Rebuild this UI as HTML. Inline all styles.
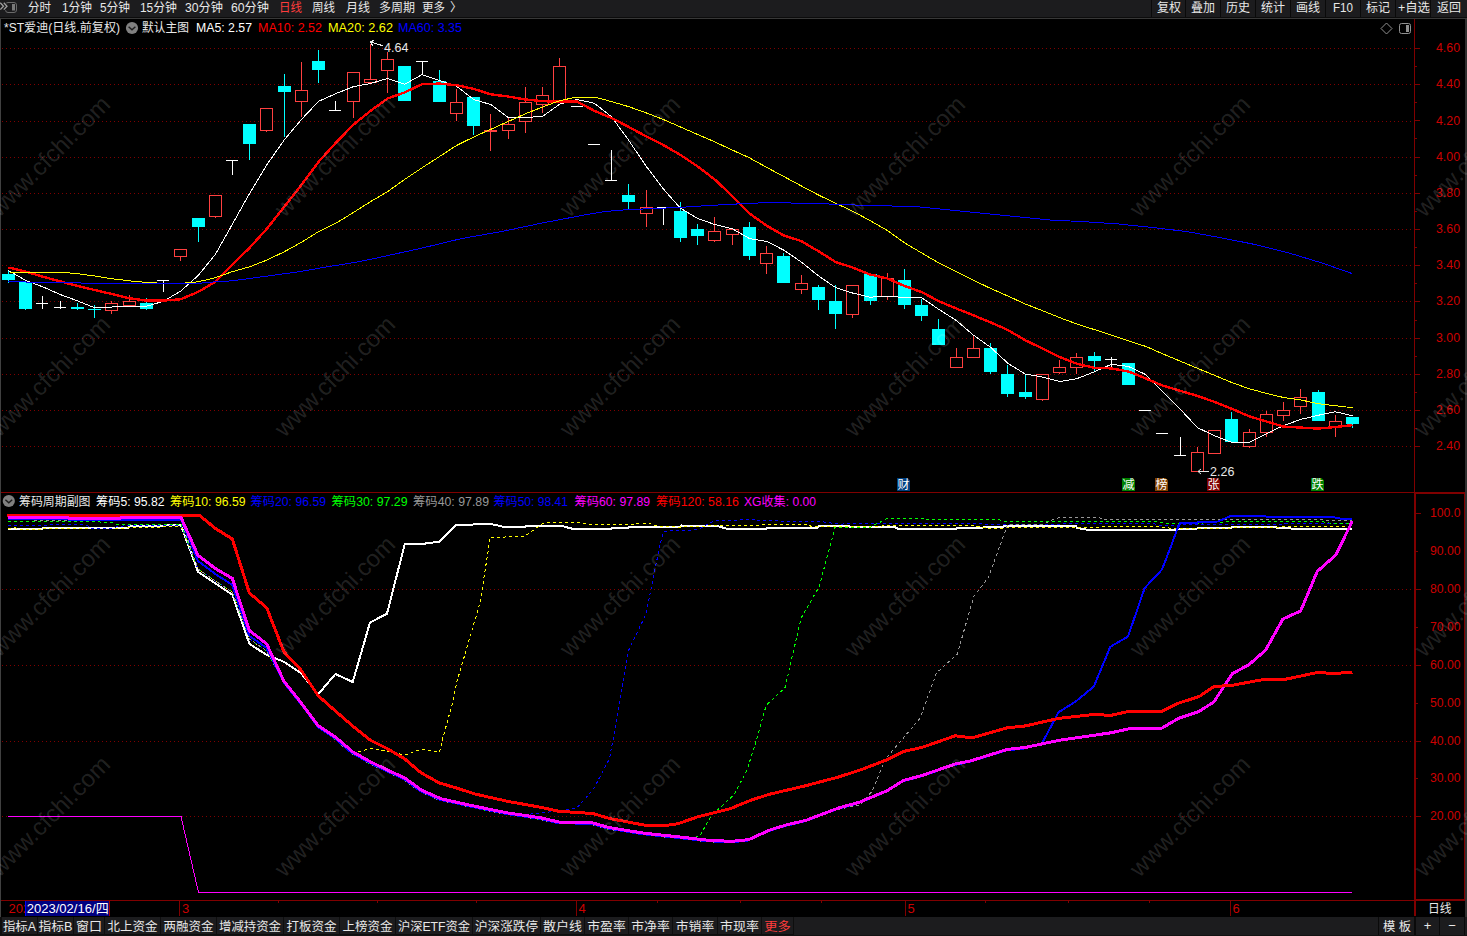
<!DOCTYPE html><html><head><meta charset="utf-8"><title>chart</title><style>
html,body{margin:0;padding:0;background:#000;}body{width:1467px;height:936px;overflow:hidden;position:relative;}
svg{position:absolute;left:0;top:0;font-family:"Liberation Sans","Noto Sans CJK SC",sans-serif;}
text{white-space:pre}
</style></head><body>
<svg width="1467" height="936" viewBox="0 0 1467 936" shape-rendering="auto">
<rect x="0" y="0" width="1467" height="936" fill="#000"/>
<line x1="2" y1="48.5" x2="1412" y2="48.5" stroke="#800000" stroke-width="1" stroke-dasharray="1 3" shape-rendering="crispEdges"/>
<line x1="2" y1="84.5" x2="1412" y2="84.5" stroke="#800000" stroke-width="1" stroke-dasharray="1 3" shape-rendering="crispEdges"/>
<line x1="2" y1="121.5" x2="1412" y2="121.5" stroke="#800000" stroke-width="1" stroke-dasharray="1 3" shape-rendering="crispEdges"/>
<line x1="2" y1="157.5" x2="1412" y2="157.5" stroke="#800000" stroke-width="1" stroke-dasharray="1 3" shape-rendering="crispEdges"/>
<line x1="2" y1="193.5" x2="1412" y2="193.5" stroke="#800000" stroke-width="1" stroke-dasharray="1 3" shape-rendering="crispEdges"/>
<line x1="2" y1="229.5" x2="1412" y2="229.5" stroke="#800000" stroke-width="1" stroke-dasharray="1 3" shape-rendering="crispEdges"/>
<line x1="2" y1="265.5" x2="1412" y2="265.5" stroke="#800000" stroke-width="1" stroke-dasharray="1 3" shape-rendering="crispEdges"/>
<line x1="2" y1="301.5" x2="1412" y2="301.5" stroke="#800000" stroke-width="1" stroke-dasharray="1 3" shape-rendering="crispEdges"/>
<line x1="2" y1="338.5" x2="1412" y2="338.5" stroke="#800000" stroke-width="1" stroke-dasharray="1 3" shape-rendering="crispEdges"/>
<line x1="2" y1="374.5" x2="1412" y2="374.5" stroke="#800000" stroke-width="1" stroke-dasharray="1 3" shape-rendering="crispEdges"/>
<line x1="2" y1="410.5" x2="1412" y2="410.5" stroke="#800000" stroke-width="1" stroke-dasharray="1 3" shape-rendering="crispEdges"/>
<line x1="2" y1="446.5" x2="1412" y2="446.5" stroke="#800000" stroke-width="1" stroke-dasharray="1 3" shape-rendering="crispEdges"/>
<line x1="2" y1="589.5" x2="1412" y2="589.5" stroke="#800000" stroke-width="1" stroke-dasharray="1 3" shape-rendering="crispEdges"/>
<line x1="2" y1="665.5" x2="1412" y2="665.5" stroke="#800000" stroke-width="1" stroke-dasharray="1 3" shape-rendering="crispEdges"/>
<line x1="2" y1="741.5" x2="1412" y2="741.5" stroke="#800000" stroke-width="1" stroke-dasharray="1 3" shape-rendering="crispEdges"/>
<line x1="2" y1="816.5" x2="1412" y2="816.5" stroke="#800000" stroke-width="1" stroke-dasharray="1 3" shape-rendering="crispEdges"/>
<g id="candles" shape-rendering="crispEdges"><line x1="8.5" y1="270.5" x2="8.5" y2="282.8" stroke="#00ffff" stroke-width="1"/><rect x="2.0" y="274.0" width="13" height="5.8" fill="#00ffff"/><line x1="25.5" y1="279.7" x2="25.5" y2="309.8" stroke="#00ffff" stroke-width="1"/><rect x="19.0" y="282.4" width="13" height="26.4" fill="#00ffff"/><line x1="42.5" y1="296.0" x2="42.5" y2="308.8" stroke="#ffffff" stroke-width="1"/><line x1="36.0" y1="303.7" x2="48.0" y2="303.7" stroke="#ffffff" stroke-width="1"/><line x1="60.5" y1="301.2" x2="60.5" y2="309.0" stroke="#ffffff" stroke-width="1"/><line x1="54.0" y1="307.5" x2="66.0" y2="307.5" stroke="#ffffff" stroke-width="1"/><line x1="77.5" y1="303.3" x2="77.5" y2="309.8" stroke="#00ffff" stroke-width="1"/><rect x="71.0" y="306.8" width="13" height="2.0" fill="#00ffff"/><line x1="94.5" y1="305.3" x2="94.5" y2="318.0" stroke="#00ffff" stroke-width="1"/><rect x="88.0" y="309.0" width="13" height="1.0" fill="#00ffff"/><line x1="111.5" y1="301.2" x2="111.5" y2="303.7" stroke="#ff4040" stroke-width="1"/><line x1="111.5" y1="310.6" x2="111.5" y2="313.5" stroke="#ff4040" stroke-width="1"/><rect x="105.5" y="303.7" width="12" height="6.9" fill="#000" stroke="#ff4040" stroke-width="1"/><line x1="129.5" y1="295.0" x2="129.5" y2="301.2" stroke="#ff4040" stroke-width="1"/><rect x="123.5" y="301.2" width="12" height="4.1" fill="#000" stroke="#ff4040" stroke-width="1"/><line x1="146.5" y1="298.2" x2="146.5" y2="309.8" stroke="#00ffff" stroke-width="1"/><rect x="140.0" y="303.3" width="13" height="5.3" fill="#00ffff"/><line x1="163.5" y1="280.6" x2="163.5" y2="291.6" stroke="#ffffff" stroke-width="1"/><line x1="157.0" y1="280.6" x2="169.0" y2="280.6" stroke="#ffffff" stroke-width="1"/><line x1="180.5" y1="256.4" x2="180.5" y2="261.3" stroke="#ff4040" stroke-width="1"/><rect x="174.5" y="249.3" width="12" height="7.1" fill="#000" stroke="#ff4040" stroke-width="1"/><line x1="198.5" y1="218.2" x2="198.5" y2="241.6" stroke="#00ffff" stroke-width="1"/><rect x="192.0" y="218.2" width="13" height="8.4" fill="#00ffff"/><line x1="215.5" y1="216.3" x2="215.5" y2="217.7" stroke="#ff4040" stroke-width="1"/><rect x="209.5" y="195.3" width="12" height="21.0" fill="#000" stroke="#ff4040" stroke-width="1"/><line x1="232.5" y1="160.7" x2="232.5" y2="174.6" stroke="#ffffff" stroke-width="1"/><line x1="226.0" y1="160.7" x2="238.0" y2="160.7" stroke="#ffffff" stroke-width="1"/><line x1="249.5" y1="124.2" x2="249.5" y2="159.6" stroke="#00ffff" stroke-width="1"/><rect x="243.0" y="124.2" width="13" height="19.3" fill="#00ffff"/><line x1="266.5" y1="130.4" x2="266.5" y2="132.4" stroke="#ff4040" stroke-width="1"/><rect x="260.5" y="108.4" width="12" height="22.0" fill="#000" stroke="#ff4040" stroke-width="1"/><line x1="284.5" y1="74.0" x2="284.5" y2="136.7" stroke="#00ffff" stroke-width="1"/><rect x="278.0" y="86.0" width="13" height="6.2" fill="#00ffff"/><line x1="301.5" y1="62.3" x2="301.5" y2="90.4" stroke="#ff4040" stroke-width="1"/><line x1="301.5" y1="101.3" x2="301.5" y2="116.8" stroke="#ff4040" stroke-width="1"/><rect x="295.5" y="90.4" width="12" height="10.9" fill="#000" stroke="#ff4040" stroke-width="1"/><line x1="318.5" y1="50.0" x2="318.5" y2="82.7" stroke="#00ffff" stroke-width="1"/><rect x="312.0" y="61.2" width="13" height="8.4" fill="#00ffff"/><line x1="335.5" y1="101.0" x2="335.5" y2="110.3" stroke="#ffffff" stroke-width="1"/><line x1="329.0" y1="110.3" x2="341.0" y2="110.3" stroke="#ffffff" stroke-width="1"/><line x1="353.5" y1="101.3" x2="353.5" y2="118.2" stroke="#ff4040" stroke-width="1"/><rect x="347.5" y="72.4" width="12" height="28.9" fill="#000" stroke="#ff4040" stroke-width="1"/><line x1="370.5" y1="43.6" x2="370.5" y2="79.3" stroke="#ff4040" stroke-width="1"/><line x1="370.5" y1="82.0" x2="370.5" y2="84.2" stroke="#ff4040" stroke-width="1"/><rect x="364.5" y="79.3" width="12" height="2.7" fill="#000" stroke="#ff4040" stroke-width="1"/><line x1="387.5" y1="51.5" x2="387.5" y2="59.3" stroke="#ff4040" stroke-width="1"/><line x1="387.5" y1="70.5" x2="387.5" y2="93.0" stroke="#ff4040" stroke-width="1"/><rect x="381.5" y="59.3" width="12" height="11.2" fill="#000" stroke="#ff4040" stroke-width="1"/><line x1="404.5" y1="66.0" x2="404.5" y2="101.0" stroke="#00ffff" stroke-width="1"/><rect x="398.0" y="66.0" width="13" height="35.0" fill="#00ffff"/><line x1="422.5" y1="61.5" x2="422.5" y2="74.6" stroke="#ffffff" stroke-width="1"/><line x1="416.0" y1="61.5" x2="428.0" y2="61.5" stroke="#ffffff" stroke-width="1"/><line x1="439.5" y1="70.3" x2="439.5" y2="101.8" stroke="#00ffff" stroke-width="1"/><rect x="433.0" y="81.1" width="13" height="20.7" fill="#00ffff"/><line x1="456.5" y1="89.3" x2="456.5" y2="102.4" stroke="#ff4040" stroke-width="1"/><line x1="456.5" y1="113.6" x2="456.5" y2="121.0" stroke="#ff4040" stroke-width="1"/><rect x="450.5" y="102.4" width="12" height="11.2" fill="#000" stroke="#ff4040" stroke-width="1"/><line x1="473.5" y1="96.9" x2="473.5" y2="134.9" stroke="#00ffff" stroke-width="1"/><rect x="467.0" y="96.9" width="13" height="28.8" fill="#00ffff"/><line x1="490.5" y1="113.8" x2="490.5" y2="151.0" stroke="#ff4040" stroke-width="1"/><line x1="484.0" y1="130.6" x2="497.0" y2="130.6" stroke="#ff4040" stroke-width="2"/><line x1="508.5" y1="116.9" x2="508.5" y2="124.3" stroke="#ff4040" stroke-width="1"/><line x1="508.5" y1="130.6" x2="508.5" y2="139.0" stroke="#ff4040" stroke-width="1"/><rect x="502.5" y="124.3" width="12" height="6.3" fill="#000" stroke="#ff4040" stroke-width="1"/><line x1="525.5" y1="87.3" x2="525.5" y2="102.4" stroke="#ff4040" stroke-width="1"/><line x1="525.5" y1="121.4" x2="525.5" y2="132.9" stroke="#ff4040" stroke-width="1"/><rect x="519.5" y="102.4" width="12" height="19.0" fill="#000" stroke="#ff4040" stroke-width="1"/><line x1="542.5" y1="87.3" x2="542.5" y2="95.4" stroke="#ff4040" stroke-width="1"/><line x1="542.5" y1="104.0" x2="542.5" y2="112.8" stroke="#ff4040" stroke-width="1"/><rect x="536.5" y="95.4" width="12" height="8.6" fill="#000" stroke="#ff4040" stroke-width="1"/><line x1="559.5" y1="58.2" x2="559.5" y2="66.4" stroke="#ff4040" stroke-width="1"/><rect x="553.5" y="66.4" width="12" height="36.0" fill="#000" stroke="#ff4040" stroke-width="1"/><line x1="571.0" y1="106.5" x2="583.0" y2="106.5" stroke="#ffffff" stroke-width="1"/><line x1="588.0" y1="144.3" x2="600.0" y2="144.3" stroke="#ffffff" stroke-width="1"/><line x1="611.5" y1="150.0" x2="611.5" y2="180.5" stroke="#ffffff" stroke-width="1"/><line x1="605.0" y1="180.5" x2="617.0" y2="180.5" stroke="#ffffff" stroke-width="1"/><line x1="628.5" y1="184.1" x2="628.5" y2="209.0" stroke="#00ffff" stroke-width="1"/><rect x="622.0" y="195.0" width="13" height="6.8" fill="#00ffff"/><line x1="646.5" y1="190.2" x2="646.5" y2="207.4" stroke="#ff4040" stroke-width="1"/><line x1="646.5" y1="213.2" x2="646.5" y2="226.7" stroke="#ff4040" stroke-width="1"/><rect x="640.5" y="207.4" width="12" height="5.8" fill="#000" stroke="#ff4040" stroke-width="1"/><line x1="663.5" y1="207.7" x2="663.5" y2="224.6" stroke="#ffffff" stroke-width="1"/><line x1="657.0" y1="207.7" x2="669.0" y2="207.7" stroke="#ffffff" stroke-width="1"/><line x1="680.5" y1="202.1" x2="680.5" y2="242.0" stroke="#00ffff" stroke-width="1"/><rect x="674.0" y="210.9" width="13" height="26.6" fill="#00ffff"/><line x1="697.5" y1="224.2" x2="697.5" y2="244.7" stroke="#00ffff" stroke-width="1"/><rect x="691.0" y="229.3" width="13" height="6.2" fill="#00ffff"/><line x1="714.5" y1="217.0" x2="714.5" y2="231.4" stroke="#ff4040" stroke-width="1"/><line x1="714.5" y1="240.6" x2="714.5" y2="241.6" stroke="#ff4040" stroke-width="1"/><rect x="708.5" y="231.4" width="12" height="9.2" fill="#000" stroke="#ff4040" stroke-width="1"/><line x1="732.5" y1="234.5" x2="732.5" y2="244.7" stroke="#ff4040" stroke-width="1"/><rect x="726.5" y="229.3" width="12" height="5.2" fill="#000" stroke="#ff4040" stroke-width="1"/><line x1="749.5" y1="222.0" x2="749.5" y2="259.8" stroke="#00ffff" stroke-width="1"/><rect x="743.0" y="227.1" width="13" height="28.6" fill="#00ffff"/><line x1="766.5" y1="245.5" x2="766.5" y2="253.3" stroke="#ff4040" stroke-width="1"/><line x1="766.5" y1="263.5" x2="766.5" y2="273.7" stroke="#ff4040" stroke-width="1"/><rect x="760.5" y="253.3" width="12" height="10.2" fill="#000" stroke="#ff4040" stroke-width="1"/><line x1="783.5" y1="253.3" x2="783.5" y2="282.9" stroke="#00ffff" stroke-width="1"/><rect x="777.0" y="255.9" width="13" height="27.0" fill="#00ffff"/><line x1="801.5" y1="275.1" x2="801.5" y2="283.3" stroke="#ff4040" stroke-width="1"/><line x1="801.5" y1="289.7" x2="801.5" y2="293.8" stroke="#ff4040" stroke-width="1"/><rect x="795.5" y="283.3" width="12" height="6.4" fill="#000" stroke="#ff4040" stroke-width="1"/><line x1="818.5" y1="285.0" x2="818.5" y2="310.0" stroke="#00ffff" stroke-width="1"/><rect x="812.0" y="287.0" width="13" height="12.7" fill="#00ffff"/><line x1="835.5" y1="285.0" x2="835.5" y2="329.0" stroke="#00ffff" stroke-width="1"/><rect x="829.0" y="301.3" width="13" height="12.3" fill="#00ffff"/><line x1="852.5" y1="314.6" x2="852.5" y2="317.7" stroke="#ff4040" stroke-width="1"/><rect x="846.5" y="285.4" width="12" height="29.2" fill="#000" stroke="#ff4040" stroke-width="1"/><line x1="870.5" y1="274.2" x2="870.5" y2="305.0" stroke="#00ffff" stroke-width="1"/><rect x="864.0" y="274.2" width="13" height="26.7" fill="#00ffff"/><line x1="887.5" y1="272.9" x2="887.5" y2="278.2" stroke="#ff4040" stroke-width="1"/><line x1="887.5" y1="296.0" x2="887.5" y2="299.8" stroke="#ff4040" stroke-width="1"/><rect x="881.5" y="278.2" width="12" height="17.8" fill="#000" stroke="#ff4040" stroke-width="1"/><line x1="904.5" y1="269.2" x2="904.5" y2="309.1" stroke="#00ffff" stroke-width="1"/><rect x="898.0" y="280.1" width="13" height="24.7" fill="#00ffff"/><line x1="921.5" y1="299.3" x2="921.5" y2="320.8" stroke="#00ffff" stroke-width="1"/><rect x="915.0" y="305.4" width="13" height="10.5" fill="#00ffff"/><line x1="938.5" y1="319.1" x2="938.5" y2="344.9" stroke="#00ffff" stroke-width="1"/><rect x="932.0" y="329.0" width="13" height="15.9" fill="#00ffff"/><line x1="956.5" y1="348.4" x2="956.5" y2="357.2" stroke="#ff4040" stroke-width="1"/><rect x="950.5" y="357.2" width="12" height="10.6" fill="#000" stroke="#ff4040" stroke-width="1"/><line x1="973.5" y1="335.1" x2="973.5" y2="348.6" stroke="#ff4040" stroke-width="1"/><rect x="967.5" y="348.6" width="12" height="9.0" fill="#000" stroke="#ff4040" stroke-width="1"/><line x1="990.5" y1="343.3" x2="990.5" y2="374.0" stroke="#00ffff" stroke-width="1"/><rect x="984.0" y="348.0" width="13" height="23.9" fill="#00ffff"/><line x1="1007.5" y1="365.2" x2="1007.5" y2="397.0" stroke="#00ffff" stroke-width="1"/><rect x="1001.0" y="374.0" width="13" height="19.8" fill="#00ffff"/><line x1="1025.5" y1="374.0" x2="1025.5" y2="398.9" stroke="#00ffff" stroke-width="1"/><rect x="1019.0" y="392.0" width="13" height="4.9" fill="#00ffff"/><line x1="1042.5" y1="399.5" x2="1042.5" y2="401.0" stroke="#ff4040" stroke-width="1"/><rect x="1036.5" y="374.4" width="12" height="25.1" fill="#000" stroke="#ff4040" stroke-width="1"/><line x1="1059.5" y1="360.3" x2="1059.5" y2="367.4" stroke="#ff4040" stroke-width="1"/><line x1="1059.5" y1="372.5" x2="1059.5" y2="374.0" stroke="#ff4040" stroke-width="1"/><rect x="1053.5" y="367.4" width="12" height="5.1" fill="#000" stroke="#ff4040" stroke-width="1"/><line x1="1076.5" y1="352.9" x2="1076.5" y2="357.4" stroke="#ff4040" stroke-width="1"/><line x1="1076.5" y1="367.4" x2="1076.5" y2="374.0" stroke="#ff4040" stroke-width="1"/><rect x="1070.5" y="357.4" width="12" height="10.0" fill="#000" stroke="#ff4040" stroke-width="1"/><line x1="1094.5" y1="352.1" x2="1094.5" y2="370.9" stroke="#00ffff" stroke-width="1"/><rect x="1088.0" y="356.2" width="13" height="4.5" fill="#00ffff"/><line x1="1111.5" y1="357.0" x2="1111.5" y2="367.8" stroke="#ffffff" stroke-width="1"/><line x1="1105.0" y1="359.0" x2="1117.0" y2="359.0" stroke="#ffffff" stroke-width="1"/><line x1="1128.5" y1="363.1" x2="1128.5" y2="384.7" stroke="#00ffff" stroke-width="1"/><rect x="1122.0" y="363.1" width="13" height="21.6" fill="#00ffff"/><line x1="1139.0" y1="410.3" x2="1151.0" y2="410.3" stroke="#ffffff" stroke-width="1"/><line x1="1156.0" y1="433.3" x2="1168.0" y2="433.3" stroke="#ffffff" stroke-width="1"/><line x1="1180.5" y1="437.2" x2="1180.5" y2="455.4" stroke="#ffffff" stroke-width="1"/><line x1="1174.0" y1="455.4" x2="1186.0" y2="455.4" stroke="#ffffff" stroke-width="1"/><line x1="1197.5" y1="447.4" x2="1197.5" y2="452.5" stroke="#ff4040" stroke-width="1"/><rect x="1191.5" y="452.5" width="12" height="19.1" fill="#000" stroke="#ff4040" stroke-width="1"/><rect x="1208.5" y="430.2" width="12" height="22.9" fill="#000" stroke="#ff4040" stroke-width="1"/><line x1="1231.5" y1="412.2" x2="1231.5" y2="441.9" stroke="#00ffff" stroke-width="1"/><rect x="1225.0" y="419.0" width="13" height="22.9" fill="#00ffff"/><line x1="1249.5" y1="429.0" x2="1249.5" y2="432.3" stroke="#ff4040" stroke-width="1"/><line x1="1249.5" y1="446.4" x2="1249.5" y2="447.6" stroke="#ff4040" stroke-width="1"/><rect x="1243.5" y="432.3" width="12" height="14.1" fill="#000" stroke="#ff4040" stroke-width="1"/><line x1="1266.5" y1="410.6" x2="1266.5" y2="414.3" stroke="#ff4040" stroke-width="1"/><line x1="1266.5" y1="432.3" x2="1266.5" y2="436.8" stroke="#ff4040" stroke-width="1"/><rect x="1260.5" y="414.3" width="12" height="18.0" fill="#000" stroke="#ff4040" stroke-width="1"/><line x1="1283.5" y1="402.4" x2="1283.5" y2="410.2" stroke="#ff4040" stroke-width="1"/><line x1="1283.5" y1="415.5" x2="1283.5" y2="420.8" stroke="#ff4040" stroke-width="1"/><rect x="1277.5" y="410.2" width="12" height="5.3" fill="#000" stroke="#ff4040" stroke-width="1"/><line x1="1300.5" y1="389.1" x2="1300.5" y2="397.5" stroke="#ff4040" stroke-width="1"/><line x1="1300.5" y1="406.5" x2="1300.5" y2="413.7" stroke="#ff4040" stroke-width="1"/><rect x="1294.5" y="397.5" width="12" height="9.0" fill="#000" stroke="#ff4040" stroke-width="1"/><line x1="1318.5" y1="390.2" x2="1318.5" y2="420.8" stroke="#00ffff" stroke-width="1"/><rect x="1312.0" y="392.2" width="13" height="28.6" fill="#00ffff"/><line x1="1335.5" y1="415.3" x2="1335.5" y2="421.4" stroke="#ff4040" stroke-width="1"/><line x1="1335.5" y1="427.0" x2="1335.5" y2="436.8" stroke="#ff4040" stroke-width="1"/><rect x="1329.5" y="421.4" width="12" height="5.6" fill="#000" stroke="#ff4040" stroke-width="1"/><line x1="1352.5" y1="417.0" x2="1352.5" y2="427.6" stroke="#00ffff" stroke-width="1"/><rect x="1346.0" y="417.0" width="13" height="6.9" fill="#00ffff"/></g>
<polyline points="8.5,270.5 25.7,280.4 42.9,286.9 60.2,294.5 77.4,300.8 94.6,307.8 111.9,307.0 129.1,306.3 146.3,306.3 163.6,301.2 180.8,291.0 198.0,275.7 215.3,254.5 232.5,224.0 249.7,193.2 267.0,164.5 284.2,140.0 301.4,119.5 318.6,101.3 335.9,93.6 353.1,86.8 370.3,83.5 387.6,78.5 404.8,84.2 422.0,74.6 439.3,80.5 456.5,86.2 473.7,99.5 491.0,104.6 508.2,117.5 525.4,117.5 542.7,116.3 559.9,104.0 577.1,99.5 594.3,103.2 611.6,116.9 628.8,140.4 646.0,166.0 663.3,188.9 680.5,208.3 697.7,218.5 715.0,224.6 732.2,228.7 749.4,238.5 766.7,241.4 783.9,250.2 801.1,261.9 818.4,275.8 835.6,287.6 852.8,293.1 870.1,297.2 887.3,296.0 904.5,297.7 921.7,297.7 939.0,309.5 956.2,320.4 973.4,335.1 990.7,347.4 1007.9,363.3 1025.1,374.0 1042.4,377.0 1059.6,381.5 1076.8,378.7 1094.1,371.9 1111.3,364.3 1128.5,366.5 1145.8,374.6 1163.0,391.8 1180.2,409.2 1197.4,427.6 1214.7,435.8 1231.9,442.5 1249.1,442.5 1266.4,433.7 1283.6,425.5 1300.8,419.4 1318.1,415.3 1335.3,411.8 1352.5,415.7" fill="none" stroke="#ffffff" stroke-width="1" shape-rendering="crispEdges" />
<polyline points="8.5,267.5 25.7,271.6 42.9,276.7 60.2,281.4 77.4,285.9 94.6,290.0 111.9,294.0 129.1,298.2 146.3,300.6 163.6,300.6 180.8,299.2 198.0,292.0 215.3,281.8 232.5,264.5 249.7,247.7 267.0,228.6 284.2,206.8 301.4,185.0 318.6,161.8 335.9,142.7 353.1,125.0 370.3,111.0 387.6,98.5 404.8,92.4 422.0,84.2 439.3,83.6 456.5,85.2 473.7,88.9 491.0,94.4 508.2,96.5 525.4,99.5 542.7,101.2 559.9,101.6 577.1,101.6 594.3,110.8 611.6,118.0 628.8,127.0 646.0,136.3 663.3,145.0 680.5,155.0 697.7,166.4 715.0,179.7 732.2,196.0 749.4,213.4 766.7,225.7 783.9,235.5 801.1,241.0 818.4,251.2 835.6,262.0 852.8,267.6 870.1,274.5 887.3,278.4 904.5,286.0 921.7,292.1 939.0,301.3 956.2,308.5 973.4,315.3 990.7,322.4 1007.9,330.0 1025.1,340.2 1042.4,348.4 1059.6,357.0 1076.8,363.7 1094.1,367.8 1111.3,368.4 1128.5,371.5 1145.8,378.5 1163.0,385.7 1180.2,390.8 1197.4,395.9 1214.7,402.0 1231.9,408.8 1249.1,416.3 1266.4,421.5 1283.6,426.6 1300.8,427.6 1318.1,428.6 1335.3,427.0 1352.5,425.1" fill="none" stroke="#ff0000" stroke-width="2.4" shape-rendering="crispEdges" />
<polyline points="8.5,272.0 25.7,272.2 42.9,272.2 60.2,272.2 77.4,273.6 94.6,276.0 111.9,278.7 129.1,280.8 146.3,282.4 163.6,283.4 180.8,283.4 198.0,281.8 215.3,277.7 232.5,271.6 249.7,266.8 267.0,260.0 284.2,251.8 301.4,242.3 318.6,231.6 335.9,223.2 353.1,212.7 370.3,201.8 387.6,191.6 404.8,179.3 422.0,167.8 439.3,156.7 456.5,145.5 473.7,137.0 491.0,129.2 508.2,121.5 525.4,113.8 542.7,107.0 559.9,100.6 577.1,97.0 594.3,97.0 611.6,101.6 628.8,106.7 646.0,112.8 663.3,119.5 680.5,127.0 697.7,134.5 715.0,142.0 732.2,150.0 749.4,157.8 766.7,167.4 783.9,176.6 801.1,185.8 818.4,195.0 835.6,203.2 852.8,211.3 870.1,220.6 887.3,230.5 904.5,242.8 921.7,253.0 939.0,263.0 956.2,271.7 973.4,280.2 990.7,288.5 1007.9,296.0 1025.1,303.9 1042.4,310.7 1059.6,317.6 1076.8,324.0 1094.1,329.5 1111.3,335.2 1128.5,340.9 1145.8,346.4 1163.0,354.0 1180.2,361.1 1197.4,368.3 1214.7,375.4 1231.9,382.6 1249.1,388.7 1266.4,393.4 1283.6,397.5 1300.8,400.0 1318.1,403.7 1335.3,405.7 1352.5,407.7" fill="none" stroke="#ffff00" stroke-width="1" shape-rendering="crispEdges" />
<polyline points="8.4,281.8 60.0,282.4 94.0,283.4 163.0,283.8 198.0,283.4 215.5,281.8 232.0,280.8 252.5,278.1 270.0,275.7 300.0,271.6 318.0,268.4 330.0,266.4 353.0,262.7 360.0,261.5 380.0,257.3 421.0,248.3 461.8,238.5 502.7,231.3 543.6,222.7 584.5,215.0 605.0,211.5 625.4,209.8 680.0,207.4 697.5,206.2 732.5,204.2 766.7,202.6 801.6,203.2 835.6,204.2 870.0,205.6 914.0,206.4 948.0,209.8 982.0,213.2 1016.0,216.6 1050.0,220.0 1084.5,221.7 1118.6,224.0 1152.7,227.5 1186.7,231.6 1220.8,237.7 1255.0,244.5 1289.0,253.0 1323.0,263.3 1352.0,273.5" fill="none" stroke="#0000ff" stroke-width="1" shape-rendering="crispEdges" />
<polyline points="8.2,529.0 42.0,529.0 43.0,527.8 113.0,527.6 116.0,528.4 128.0,528.4 129.0,526.4 163.0,526.4 164.0,525.5 181.0,525.3 198.0,571.8 215.3,583.3 232.3,594.7 249.4,643.8 266.7,655.0 284.0,661.8 301.0,673.0 318.0,694.5 335.4,674.0 352.7,682.0 370.0,622.5 387.0,613.7 404.8,544.0 422.0,544.0 439.5,541.6 456.4,524.7 472.7,524.7 474.4,523.9 489.9,523.9 496.4,525.2 503.0,526.8 525.0,526.8 525.9,525.5 560.2,525.5 569.2,528.0 573.3,528.9 611.0,528.9 611.8,528.0 628.1,528.0 629.0,526.8 680.4,527.1 681.3,525.5 717.3,526.0 727.1,528.8 766.3,528.8 767.2,527.6 817.9,527.6 818.7,526.3 894.0,526.8 898.0,528.8 956.0,528.8 957.0,527.6 981.4,527.6 1007.6,526.3 1076.3,526.3 1077.0,528.0 1087.8,529.8 1176.9,529.8 1180.2,528.8 1196.5,528.8 1198.2,527.6 1230.9,528.0 1232.5,526.8 1275.0,526.8 1276.7,527.6 1288.1,528.0 1294.7,529.3 1352.0,529.3" fill="none" stroke="#ffffff" stroke-width="2" shape-rendering="crispEdges" />
<polyline points="8.2,528.5 15.0,527.5 20.0,529.5 42.0,529.5 43.0,528.5 113.0,528.5 120.0,529.0 128.0,527.5 135.0,527.0 163.0,527.0 165.0,526.0 181.0,526.0 198.0,569.0 215.3,581.0 232.3,592.0 249.4,639.0 266.7,651.0 284.0,683.0 301.0,704.0 318.0,727.0 335.4,738.7 352.7,753.4 370.0,748.5 387.0,751.0 404.8,755.0 422.0,749.0 439.5,752.4 442.5,739.3 453.3,700.0 456.5,683.0 480.0,603.0 489.1,544.8 489.9,537.4 521.8,536.6 525.1,536.1 538.2,526.8 543.0,523.5 551.2,522.4 579.0,522.4 592.1,524.9 639.6,523.9 651.0,523.9 657.6,526.3 680.4,527.1 682.0,526.3 704.2,526.3 709.0,525.2 758.2,525.2 759.8,524.4 807.2,524.4 812.1,526.8 880.0,526.3 886.5,525.2 974.9,525.2 978.2,526.8 988.0,528.4 1004.3,528.4 1007.6,527.1 1076.3,527.1 1089.4,527.6 1102.5,526.8 1103.3,526.3 1155.6,526.3 1165.4,527.6 1176.9,528.9 1198.2,528.5 1227.6,528.5 1232.5,527.3 1280.0,527.3 1283.2,526.5 1352.0,526.5" fill="none" stroke="#ffff00" stroke-width="1" stroke-dasharray="3 3" shape-rendering="crispEdges" />
<polyline points="8.2,525.5 45.0,525.5 50.0,524.6 82.0,524.6 88.0,526.0 92.0,528.4 113.0,528.4 116.0,527.0 123.0,526.0 181.0,525.5 198.0,569.0 215.3,581.0 232.3,592.0 249.4,639.0 266.7,651.0 284.0,683.0 301.0,704.0 318.0,727.0 333.9,738.5 351.2,753.3 368.5,763.1 385.5,771.3 403.3,779.5 419.8,791.5 439.5,800.3 473.5,807.8 506.5,814.5 535.8,813.9 576.7,808.0 593.0,790.0 609.4,759.0 614.3,732.7 620.0,700.0 627.8,652.0 645.8,614.5 660.0,544.8 663.3,531.7 669.8,530.9 697.6,529.8 709.0,523.5 715.6,520.3 738.5,520.3 741.8,519.5 753.3,519.5 758.2,520.8 820.3,521.4 836.7,523.9 841.6,524.4 844.9,523.5 978.2,523.5 986.3,524.5 1007.6,524.5 1120.0,523.5 1154.0,523.5 1157.3,525.2 1214.5,524.7 1280.0,524.5 1284.9,523.5 1352.0,523.5" fill="none" stroke="#0000ff" stroke-width="1" stroke-dasharray="3 3" shape-rendering="crispEdges" />
<polyline points="8.2,521.6 100.0,522.0 113.0,522.0 116.0,524.0 181.0,524.0 198.0,569.0 215.3,581.0 232.3,592.0 249.4,639.0 266.7,651.0 284.0,683.0 301.0,704.0 318.0,727.0 333.9,738.5 351.2,753.3 368.5,763.1 385.5,771.3 403.3,779.5 419.8,791.5 439.5,800.3 473.5,807.8 506.5,814.5 539.2,819.3 557.2,823.5 591.5,824.5 607.9,829.1 642.3,834.7 676.5,838.3 699.4,836.8 710.9,816.2 733.8,795.0 746.9,770.4 756.7,739.3 764.9,709.8 766.9,704.5 784.9,688.0 801.2,617.8 819.2,586.7 830.1,545.6 834.2,531.7 835.0,527.3 871.0,527.3 872.7,525.2 879.2,522.7 885.8,519.1 889.0,518.5 925.8,518.5 927.4,519.8 999.4,519.8 1002.7,521.5 1154.0,521.5 1165.4,523.5 1178.5,523.5 1217.8,522.7 1230.9,521.5 1320.9,521.5 1329.0,523.0 1352.0,523.5" fill="none" stroke="#00ff00" stroke-width="1" stroke-dasharray="3 3" shape-rendering="crispEdges" />
<polyline points="34.0,520.5 181.0,520.5 198.0,569.0 215.3,581.0 232.3,592.0 249.4,639.0 266.7,651.0 284.0,683.0 301.0,704.0 318.0,727.0 333.9,738.5 351.2,753.3 368.5,763.1 385.5,771.3 403.3,779.5 419.8,791.5 439.5,800.3 473.5,807.8 506.5,814.5 539.2,819.3 557.2,823.5 591.5,824.5 607.9,829.1 642.3,834.7 676.5,838.3 704.5,841.5 729.0,842.9 747.0,841.2 768.3,831.5 784.5,826.5 804.3,821.9 837.0,809.5 860.0,805.0 872.4,790.8 884.8,759.8 920.0,718.4 936.5,672.9 957.2,654.3 973.8,596.4 988.3,577.7 1000.2,544.8 1006.0,529.3 1007.6,524.4 1043.6,524.4 1048.5,521.9 1053.4,519.5 1060.0,517.5 1099.2,517.5 1102.5,519.1 1103.3,519.5 1320.9,519.5 1329.0,520.5 1352.0,521.0" fill="none" stroke="#989898" stroke-width="1" stroke-dasharray="3 3" shape-rendering="crispEdges" />
<polyline points="8.2,519.0 68.0,519.0 69.0,520.0 120.0,520.0 121.0,519.5 181.0,519.5 198.0,561.0 215.3,574.0 232.3,585.0 249.4,636.0 266.7,648.0 284.0,683.0 301.0,704.0 318.0,727.0 334.4,738.0 351.7,752.8 369.0,762.6 386.0,770.8 403.8,779.0 420.3,791.0 440.0,799.8 474.0,807.3 507.0,814.0 539.7,818.8 557.7,823.0 592.0,824.0 608.4,828.6 642.8,834.2 677.0,837.8 705.0,841.0 729.5,842.4 747.5,840.7 768.8,831.0 785.0,826.0 804.8,821.4 837.5,809.0 859.0,803.0 885.9,791.8 902.4,781.5 921.0,776.5 954.2,765.0 970.7,761.6 1005.9,750.5 1024.5,748.4 1042.0,743.2 1058.6,712.2 1075.2,701.9 1093.8,686.6 1110.3,646.8 1128.0,636.5 1144.7,588.0 1162.0,569.5 1170.3,548.0 1176.9,530.0 1180.2,523.0 1196.5,523.0 1198.2,522.0 1217.8,521.5 1226.0,518.0 1230.9,516.0 1265.2,516.0 1266.9,517.0 1334.0,517.0 1335.6,518.0 1343.7,519.0 1352.4,519.5" fill="none" stroke="#0000ff" stroke-width="2" shape-rendering="crispEdges" />
<polyline points="6.8,515.5 199.6,515.5 215.5,528.5 232.3,539.0 249.4,593.0 266.7,607.8 284.0,652.0 301.0,670.0 318.0,695.5 335.4,711.0 352.7,726.0 370.0,740.0 387.0,748.5 404.8,759.0 421.3,773.0 439.5,783.0 456.5,788.0 475.0,794.0 490.4,797.5 508.0,801.4 540.7,807.3 558.7,811.3 593.0,813.5 609.4,818.5 643.8,825.0 661.8,826.0 678.0,823.7 697.8,816.8 730.5,808.6 751.8,799.8 769.8,794.2 805.8,785.7 838.5,777.0 860.0,770.1 886.9,759.8 903.4,751.5 922.0,747.4 955.2,735.8 971.7,737.9 1006.9,727.9 1025.5,725.9 1058.6,718.4 1095.8,714.3 1110.3,715.5 1128.9,711.4 1162.0,711.4 1178.6,703.1 1199.3,696.5 1213.8,686.6 1232.4,685.3 1265.5,679.1 1286.2,679.1 1319.3,672.1 1331.7,673.7 1352.4,672.1" fill="none" stroke="#ff0000" stroke-width="3" shape-rendering="crispEdges" />
<polyline points="8.2,517.5 68.0,517.5 69.0,518.5 120.0,518.5 121.0,517.5 181.0,517.5 198.0,555.4 215.3,568.5 232.3,578.4 249.4,630.7 266.7,643.8 284.0,681.4 301.0,702.7 318.0,725.6 335.4,737.0 352.7,751.8 370.0,761.6 387.0,769.8 404.8,778.0 421.3,790.0 441.0,798.8 475.0,806.3 508.0,813.0 540.7,817.8 558.7,822.0 593.0,823.0 609.4,827.6 643.8,833.2 678.0,836.8 706.0,840.0 730.5,841.4 748.5,839.7 769.8,830.0 786.0,825.0 805.8,820.4 838.5,808.0 860.0,802.0 886.9,790.8 903.4,780.5 922.0,775.5 955.2,764.0 971.7,760.6 1006.9,749.5 1025.5,747.4 1058.6,740.4 1095.8,735.0 1110.3,732.9 1128.9,728.8 1162.0,728.0 1178.6,718.4 1199.3,711.4 1213.8,701.9 1232.4,673.7 1249.0,664.6 1265.5,650.2 1282.9,619.0 1300.7,610.9 1317.2,571.5 1335.8,555.0 1352.4,521.0" fill="none" stroke="#ff00ff" stroke-width="3" shape-rendering="crispEdges" />
<polyline points="1110.3,715.5 1128.9,711.4 1162.0,711.4 1178.6,703.1 1199.3,696.5 1213.8,686.6 1232.4,685.3 1265.5,679.1 1286.2,679.1 1319.3,672.1 1331.7,673.7 1352.4,672.1" fill="none" stroke="#ff0000" stroke-width="3" shape-rendering="crispEdges" />
<polyline points="8.2,816.5 181.0,816.5 198.5,892.5 1352.0,892.5" fill="none" stroke="#ff00ff" stroke-width="1" shape-rendering="crispEdges" />
<g shape-rendering="crispEdges" stroke="#800000" stroke-width="1">
<line x1="0" y1="492.5" x2="1465" y2="492.5"/><line x1="1414" y1="493.5" x2="1465" y2="493.5"/>
<line x1="0" y1="900.5" x2="1465" y2="900.5"/>
<line x1="1414.5" y1="19" x2="1414.5" y2="916"/><line x1="1415.5" y1="492" x2="1415.5" y2="916"/>
<line x1="1464.5" y1="492" x2="1464.5" y2="900"/><line x1="1415" y1="899.5" x2="1465" y2="899.5"/>
<line x1="1415" y1="48.5" x2="1420" y2="48.5"/>
<line x1="1415" y1="66.5" x2="1417" y2="66.5"/>
<line x1="1415" y1="84.5" x2="1420" y2="84.5"/>
<line x1="1415" y1="102.5" x2="1417" y2="102.5"/>
<line x1="1415" y1="120.5" x2="1420" y2="120.5"/>
<line x1="1415" y1="138.5" x2="1417" y2="138.5"/>
<line x1="1415" y1="157.5" x2="1420" y2="157.5"/>
<line x1="1415" y1="175.5" x2="1417" y2="175.5"/>
<line x1="1415" y1="193.5" x2="1420" y2="193.5"/>
<line x1="1415" y1="211.5" x2="1417" y2="211.5"/>
<line x1="1415" y1="229.5" x2="1420" y2="229.5"/>
<line x1="1415" y1="247.5" x2="1417" y2="247.5"/>
<line x1="1415" y1="265.5" x2="1420" y2="265.5"/>
<line x1="1415" y1="283.5" x2="1417" y2="283.5"/>
<line x1="1415" y1="301.5" x2="1420" y2="301.5"/>
<line x1="1415" y1="320.5" x2="1417" y2="320.5"/>
<line x1="1415" y1="338.5" x2="1420" y2="338.5"/>
<line x1="1415" y1="356.5" x2="1417" y2="356.5"/>
<line x1="1415" y1="374.5" x2="1420" y2="374.5"/>
<line x1="1415" y1="392.5" x2="1417" y2="392.5"/>
<line x1="1415" y1="410.5" x2="1420" y2="410.5"/>
<line x1="1415" y1="428.5" x2="1417" y2="428.5"/>
<line x1="1415" y1="446.5" x2="1420" y2="446.5"/>
<line x1="1416" y1="513.5" x2="1421" y2="513.5"/>
<line x1="1416" y1="551.5" x2="1418" y2="551.5"/>
<line x1="1416" y1="589.5" x2="1421" y2="589.5"/>
<line x1="1416" y1="627.5" x2="1418" y2="627.5"/>
<line x1="1416" y1="665.5" x2="1421" y2="665.5"/>
<line x1="1416" y1="703.5" x2="1418" y2="703.5"/>
<line x1="1416" y1="741.5" x2="1421" y2="741.5"/>
<line x1="1416" y1="778.5" x2="1418" y2="778.5"/>
<line x1="1416" y1="816.5" x2="1421" y2="816.5"/>
<line x1="278.5" y1="900" x2="278.5" y2="903"/>
<line x1="377.5" y1="900" x2="377.5" y2="903"/>
<line x1="476.5" y1="900" x2="476.5" y2="903"/>
<line x1="657.5" y1="900" x2="657.5" y2="903"/>
<line x1="740.5" y1="900" x2="740.5" y2="903"/>
<line x1="821.5" y1="900" x2="821.5" y2="903"/>
<line x1="985.5" y1="900" x2="985.5" y2="903"/>
<line x1="1068.5" y1="900" x2="1068.5" y2="903"/>
<line x1="1149.5" y1="900" x2="1149.5" y2="903"/>
<line x1="179.5" y1="900" x2="179.5" y2="916"/>
<line x1="576.5" y1="900" x2="576.5" y2="916"/>
<line x1="905.5" y1="900" x2="905.5" y2="916"/>
<line x1="1230.5" y1="900" x2="1230.5" y2="916"/>
</g>
<text x="1436" y="51.9" font-size="12.5" fill="#cc0000" textLength="24" lengthAdjust="spacingAndGlyphs">4.60</text>
<text x="1436" y="87.9" font-size="12.5" fill="#cc0000" textLength="24" lengthAdjust="spacingAndGlyphs">4.40</text>
<text x="1436" y="124.9" font-size="12.5" fill="#cc0000" textLength="24" lengthAdjust="spacingAndGlyphs">4.20</text>
<text x="1436" y="160.9" font-size="12.5" fill="#cc0000" textLength="24" lengthAdjust="spacingAndGlyphs">4.00</text>
<text x="1436" y="196.9" font-size="12.5" fill="#cc0000" textLength="24" lengthAdjust="spacingAndGlyphs">3.80</text>
<text x="1436" y="232.9" font-size="12.5" fill="#cc0000" textLength="24" lengthAdjust="spacingAndGlyphs">3.60</text>
<text x="1436" y="268.9" font-size="12.5" fill="#cc0000" textLength="24" lengthAdjust="spacingAndGlyphs">3.40</text>
<text x="1436" y="304.9" font-size="12.5" fill="#cc0000" textLength="24" lengthAdjust="spacingAndGlyphs">3.20</text>
<text x="1436" y="341.9" font-size="12.5" fill="#cc0000" textLength="24" lengthAdjust="spacingAndGlyphs">3.00</text>
<text x="1436" y="377.9" font-size="12.5" fill="#cc0000" textLength="24" lengthAdjust="spacingAndGlyphs">2.80</text>
<text x="1436" y="413.9" font-size="12.5" fill="#cc0000" textLength="24" lengthAdjust="spacingAndGlyphs">2.60</text>
<text x="1436" y="449.9" font-size="12.5" fill="#cc0000" textLength="24" lengthAdjust="spacingAndGlyphs">2.40</text>
<text x="1430" y="517.4" font-size="12.5" fill="#cc0000" textLength="30.5" lengthAdjust="spacingAndGlyphs">100.0</text>
<text x="1430" y="555.4" font-size="12.5" fill="#cc0000" textLength="30.5" lengthAdjust="spacingAndGlyphs">90.00</text>
<text x="1430" y="593.4" font-size="12.5" fill="#cc0000" textLength="30.5" lengthAdjust="spacingAndGlyphs">80.00</text>
<text x="1430" y="631.4" font-size="12.5" fill="#cc0000" textLength="30.5" lengthAdjust="spacingAndGlyphs">70.00</text>
<text x="1430" y="669.4" font-size="12.5" fill="#cc0000" textLength="30.5" lengthAdjust="spacingAndGlyphs">60.00</text>
<text x="1430" y="707.4" font-size="12.5" fill="#cc0000" textLength="30.5" lengthAdjust="spacingAndGlyphs">50.00</text>
<text x="1430" y="745.4" font-size="12.5" fill="#cc0000" textLength="30.5" lengthAdjust="spacingAndGlyphs">40.00</text>
<text x="1430" y="782.4" font-size="12.5" fill="#cc0000" textLength="30.5" lengthAdjust="spacingAndGlyphs">30.00</text>
<text x="1430" y="820.4" font-size="12.5" fill="#cc0000" textLength="30.5" lengthAdjust="spacingAndGlyphs">20.00</text>
<text x="182" y="912.7" font-size="13" fill="#cc0000">3</text>
<text x="578.5" y="912.7" font-size="13" fill="#cc0000">4</text>
<text x="907.5" y="912.7" font-size="13" fill="#cc0000">5</text>
<text x="1232.5" y="912.7" font-size="13" fill="#cc0000">6</text>
<text x="8.5" y="912.7" font-size="13" fill="#cc0000">202</text>
<rect x="25" y="901" width="84" height="15" fill="#000080"/><rect x="25" y="901" width="1" height="15" fill="#0000ff"/><rect x="109" y="901" width="1" height="15" fill="#a00000"/>
<text x="26.7" y="912.7" font-size="13" fill="#ffffff" textLength="82" lengthAdjust="spacingAndGlyphs">2023/02/16/四</text>
<text x="1428" y="912.7" font-size="12" fill="#e8e8e8" textLength="23.5" lengthAdjust="spacingAndGlyphs">日线</text>
<rect x="0" y="0" width="1467" height="17" fill="#1c1c1e"/>
<rect x="0" y="17" width="1467" height="1" fill="#0c0c0c"/><rect x="0" y="18" width="1467" height="1" fill="#383838"/>
<rect x="0" y="19" width="1" height="898" fill="#404040"/>
<rect x="1465" y="19" width="2" height="898" fill="#303030"/>
<text x="28" y="12.3" font-size="12" fill="#e8e8e8" textLength="23" lengthAdjust="spacingAndGlyphs">分时</text>
<text x="62" y="12.3" font-size="12" fill="#e8e8e8" textLength="30" lengthAdjust="spacingAndGlyphs">1分钟</text>
<text x="100" y="12.3" font-size="12" fill="#e8e8e8" textLength="30" lengthAdjust="spacingAndGlyphs">5分钟</text>
<text x="140" y="12.3" font-size="12" fill="#e8e8e8" textLength="37" lengthAdjust="spacingAndGlyphs">15分钟</text>
<text x="185" y="12.3" font-size="12" fill="#e8e8e8" textLength="38" lengthAdjust="spacingAndGlyphs">30分钟</text>
<text x="231" y="12.3" font-size="12" fill="#e8e8e8" textLength="38" lengthAdjust="spacingAndGlyphs">60分钟</text>
<text x="279" y="12.3" font-size="12" fill="#ff3c3c" textLength="23" lengthAdjust="spacingAndGlyphs">日线</text>
<text x="312" y="12.3" font-size="12" fill="#e8e8e8" textLength="23" lengthAdjust="spacingAndGlyphs">周线</text>
<text x="346" y="12.3" font-size="12" fill="#e8e8e8" textLength="24" lengthAdjust="spacingAndGlyphs">月线</text>
<text x="379" y="12.3" font-size="12" fill="#e8e8e8" textLength="36" lengthAdjust="spacingAndGlyphs">多周期</text>
<text x="422" y="12.3" font-size="12" fill="#e8e8e8" textLength="23" lengthAdjust="spacingAndGlyphs">更多</text>
<text x="450" y="12.3" font-size="12" fill="#e8e8e8">〉</text>
<rect x="1151" y="0" width="1" height="17" fill="#0a0a0a"/>
<rect x="1185" y="0" width="1" height="17" fill="#0a0a0a"/>
<rect x="1220" y="0" width="1" height="17" fill="#0a0a0a"/>
<rect x="1255" y="0" width="1" height="17" fill="#0a0a0a"/>
<rect x="1290" y="0" width="1" height="17" fill="#0a0a0a"/>
<rect x="1325" y="0" width="1" height="17" fill="#0a0a0a"/>
<rect x="1360" y="0" width="1" height="17" fill="#0a0a0a"/>
<rect x="1395" y="0" width="1" height="17" fill="#0a0a0a"/>
<rect x="1430" y="0" width="1" height="17" fill="#0a0a0a"/>
<text x="1157" y="12.3" font-size="12" fill="#e8e8e8" textLength="24" lengthAdjust="spacingAndGlyphs">复权</text>
<text x="1191" y="12.3" font-size="12" fill="#e8e8e8" textLength="24" lengthAdjust="spacingAndGlyphs">叠加</text>
<text x="1226" y="12.3" font-size="12" fill="#e8e8e8" textLength="24" lengthAdjust="spacingAndGlyphs">历史</text>
<text x="1261" y="12.3" font-size="12" fill="#e8e8e8" textLength="24" lengthAdjust="spacingAndGlyphs">统计</text>
<text x="1296" y="12.3" font-size="12" fill="#e8e8e8" textLength="24" lengthAdjust="spacingAndGlyphs">画线</text>
<text x="1333" y="12.3" font-size="12" fill="#e8e8e8" textLength="20" lengthAdjust="spacingAndGlyphs">F10</text>
<text x="1366" y="12.3" font-size="12" fill="#e8e8e8" textLength="24" lengthAdjust="spacingAndGlyphs">标记</text>
<text x="1398" y="12.3" font-size="12" fill="#e8e8e8" textLength="32" lengthAdjust="spacingAndGlyphs">+自选</text>
<text x="1437" y="12.3" font-size="12" fill="#e8e8e8" textLength="24" lengthAdjust="spacingAndGlyphs">返回</text>
<text x="4" y="32.3" font-size="12" fill="#e8e8e8" textLength="116" lengthAdjust="spacingAndGlyphs">*ST爱迪(日线.前复权)</text>
<circle cx="132" cy="28" r="6.1" fill="#808080"/><polyline points="128.6,26.7 132,29.8 135.4,26.7" fill="none" stroke="#1c1c1c" stroke-width="1.4"/>
<text x="142" y="32.3" font-size="12" fill="#e8e8e8" textLength="47" lengthAdjust="spacingAndGlyphs">默认主图</text>
<text x="196" y="32.3" font-size="12" fill="#ffffff" textLength="56" lengthAdjust="spacingAndGlyphs">MA5: 2.57</text>
<text x="258" y="32.3" font-size="12" fill="#ff0000" textLength="64" lengthAdjust="spacingAndGlyphs">MA10: 2.52</text>
<text x="328" y="32.3" font-size="12" fill="#ffff00" textLength="65" lengthAdjust="spacingAndGlyphs">MA20: 2.62</text>
<text x="398" y="32.3" font-size="12" fill="#0000ff" textLength="64" lengthAdjust="spacingAndGlyphs">MA60: 3.35</text>
<circle cx="8.8" cy="501" r="6.1" fill="#808080"/><polyline points="5.4,499.7 8.8,502.8 12.2,499.7" fill="none" stroke="#1c1c1c" stroke-width="1.4"/>
<text x="19" y="505.5" font-size="12" fill="#e8e8e8" textLength="71.5" lengthAdjust="spacingAndGlyphs">筹码周期副图</text>
<text x="96" y="505.5" font-size="12" fill="#ffffff" textLength="68.5" lengthAdjust="spacingAndGlyphs">筹码5: 95.82</text>
<text x="170" y="505.5" font-size="12" fill="#ffff00" textLength="75.5" lengthAdjust="spacingAndGlyphs">筹码10: 96.59</text>
<text x="250.5" y="505.5" font-size="12" fill="#0000ff" textLength="75.5" lengthAdjust="spacingAndGlyphs">筹码20: 96.59</text>
<text x="331.5" y="505.5" font-size="12" fill="#00ff00" textLength="76.0" lengthAdjust="spacingAndGlyphs">筹码30: 97.29</text>
<text x="413" y="505.5" font-size="12" fill="#989898" textLength="76" lengthAdjust="spacingAndGlyphs">筹码40: 97.89</text>
<text x="493.5" y="505.5" font-size="12" fill="#0000ff" textLength="74.5" lengthAdjust="spacingAndGlyphs">筹码50: 98.41</text>
<text x="574.5" y="505.5" font-size="12" fill="#ff00ff" textLength="75.5" lengthAdjust="spacingAndGlyphs">筹码60: 97.89</text>
<text x="656" y="505.5" font-size="12" fill="#ff0000" textLength="83" lengthAdjust="spacingAndGlyphs">筹码120: 58.16</text>
<text x="744" y="505.5" font-size="12" fill="#ff00ff" textLength="72" lengthAdjust="spacingAndGlyphs">XG收集: 0.00</text>
<polygon points="1386.5,23 1392,28.5 1386.5,34 1381,28.5" fill="none" stroke="#909090" stroke-width="1"/>
<rect x="1399.5" y="23.5" width="11" height="10" rx="2" fill="none" stroke="#909090" stroke-width="1"/><rect x="1406" y="25" width="3" height="7" fill="#909090"/>
<text x="384" y="52" font-size="12.5" fill="#e8e8e8">4.64</text>
<path d="M382.5,45.6 L370.5,42 M370.5,42 L374,40.3 M370.5,42 L372.8,45.6" stroke="#f0f0f0" stroke-width="1" fill="none" shape-rendering="crispEdges"/>
<text x="1210" y="476" font-size="12.5" fill="#e8e8e8">2.26</text>
<path d="M1209,471.5 L1198,471.5 M1198,471.5 l3,-2.5 M1198,471.5 l3,2.5" stroke="#e8e8e8" stroke-width="1" fill="none"/>
<rect x="897" y="478" width="13" height="13" fill="#004080"/><polygon points="907.5,478 910,478 910,480.5" fill="#000"/>
<text x="897.5" y="489" font-size="12" fill="#ffffff">财</text>
<rect x="1122" y="478" width="13" height="13" fill="#008000"/><polygon points="1132.5,478 1135,478 1135,480.5" fill="#000"/>
<text x="1122.5" y="489" font-size="12" fill="#ffffff">减</text>
<rect x="1155" y="478" width="13" height="13" fill="#804000"/><polygon points="1165.5,478 1168,478 1168,480.5" fill="#000"/>
<text x="1155.5" y="489" font-size="12" fill="#ffffff">榜</text>
<rect x="1207" y="478" width="13" height="13" fill="#800000"/><polygon points="1217.5,478 1220,478 1220,480.5" fill="#000"/>
<text x="1207.5" y="489" font-size="12" fill="#ffffff">张</text>
<rect x="1311" y="478" width="13" height="13" fill="#008000"/><polygon points="1321.5,478 1324,478 1324,480.5" fill="#000"/>
<text x="1311.5" y="489" font-size="12" fill="#ffffff">跌</text>
<rect x="0" y="917" width="1467" height="19" fill="#0e0e0e"/><rect x="794" y="917" width="673" height="18" fill="#1c1c1e"/>
<rect x="2" y="917" width="35" height="17" fill="#1c1c1e"/>
<text x="3.0" y="930.5" font-size="12" fill="#e8e8e8" textLength="33.0" lengthAdjust="spacingAndGlyphs">指标A</text>
<rect x="38" y="917" width="35" height="17" fill="#1c1c1e"/>
<text x="38.5" y="930.5" font-size="12" fill="#e8e8e8" textLength="34.0" lengthAdjust="spacingAndGlyphs">指标B</text>
<rect x="74" y="917" width="30" height="17" fill="#1c1c1e"/>
<text x="76.0" y="930.5" font-size="12" fill="#e8e8e8" textLength="26.0" lengthAdjust="spacingAndGlyphs">窗口</text>
<rect x="105" y="917" width="55" height="17" fill="#1c1c1e"/>
<text x="107.5" y="930.5" font-size="12" fill="#e8e8e8" textLength="50.0" lengthAdjust="spacingAndGlyphs">北上资金</text>
<rect x="161" y="917" width="55" height="17" fill="#1c1c1e"/>
<text x="163.5" y="930.5" font-size="12" fill="#e8e8e8" textLength="50.0" lengthAdjust="spacingAndGlyphs">两融资金</text>
<rect x="217" y="917" width="66" height="17" fill="#1c1c1e"/>
<text x="219.0" y="930.5" font-size="12" fill="#e8e8e8" textLength="62.0" lengthAdjust="spacingAndGlyphs">增减持资金</text>
<rect x="284" y="917" width="55" height="17" fill="#1c1c1e"/>
<text x="286.5" y="930.5" font-size="12" fill="#e8e8e8" textLength="50.0" lengthAdjust="spacingAndGlyphs">打板资金</text>
<rect x="340" y="917" width="55" height="17" fill="#1c1c1e"/>
<text x="342.5" y="930.5" font-size="12" fill="#e8e8e8" textLength="50.0" lengthAdjust="spacingAndGlyphs">上榜资金</text>
<rect x="396" y="917" width="76" height="17" fill="#1c1c1e"/>
<text x="398.0" y="930.5" font-size="12" fill="#e8e8e8" textLength="72.0" lengthAdjust="spacingAndGlyphs">沪深ETF资金</text>
<rect x="473" y="917" width="67" height="17" fill="#1c1c1e"/>
<text x="475.0" y="930.5" font-size="12" fill="#e8e8e8" textLength="63.0" lengthAdjust="spacingAndGlyphs">沪深涨跌停</text>
<rect x="541" y="917" width="43" height="17" fill="#1c1c1e"/>
<text x="543.0" y="930.5" font-size="12" fill="#e8e8e8" textLength="39.0" lengthAdjust="spacingAndGlyphs">散户线</text>
<rect x="585" y="917" width="43" height="17" fill="#1c1c1e"/>
<text x="587.2" y="930.5" font-size="12" fill="#e8e8e8" textLength="38.59999999999991" lengthAdjust="spacingAndGlyphs">市盈率</text>
<rect x="629" y="917" width="43" height="17" fill="#1c1c1e"/>
<text x="631.2" y="930.5" font-size="12" fill="#e8e8e8" textLength="38.59999999999991" lengthAdjust="spacingAndGlyphs">市净率</text>
<rect x="673" y="917" width="44" height="17" fill="#1c1c1e"/>
<text x="675.8" y="930.5" font-size="12" fill="#e8e8e8" textLength="38.40000000000009" lengthAdjust="spacingAndGlyphs">市销率</text>
<rect x="718" y="917" width="43" height="17" fill="#1c1c1e"/>
<text x="720.0" y="930.5" font-size="12" fill="#e8e8e8" textLength="39.0" lengthAdjust="spacingAndGlyphs">市现率</text>
<rect x="762" y="917" width="31" height="17" fill="#1c1c1e"/>
<text x="764.2" y="930.5" font-size="12" fill="#ff3c3c" textLength="26.59999999999991" lengthAdjust="spacingAndGlyphs">更多</text>
<rect x="1378" y="917" width="1" height="19" fill="#0a0a0a"/>
<rect x="1414" y="917" width="2" height="19" fill="#0a0a0a"/>
<rect x="1439" y="917" width="1" height="19" fill="#0a0a0a"/>
<rect x="1464" y="917" width="1" height="19" fill="#0a0a0a"/>
<rect x="1465" y="917" width="2" height="19" fill="#1c1c1e"/><rect x="0" y="935" width="1467" height="1" fill="#121212"/>
<text x="1383" y="930.5" font-size="12" fill="#e8e8e8" textLength="28" lengthAdjust="spacingAndGlyphs">模 板</text>
<text x="1427.5" y="930" font-size="13" fill="#e8e8e8" text-anchor="middle">+</text><text x="1452" y="930" font-size="13" fill="#e8e8e8" text-anchor="middle">−</text>
<rect x="5.5" y="2.5" width="11" height="10" rx="2.5" fill="none" stroke="#6a6a6a"/><rect x="12" y="4" width="3" height="6.5" fill="#7a7a7a"/>
<path d="M0.3,2.8 L3.5,6.2 L0.3,9.6 M3.8,2.8 L7,6.2 L3.8,9.6" stroke="#1c1c1e" stroke-width="3.2" fill="none"/>
<path d="M0.3,2.8 L3.5,6.2 L0.3,9.6 M3.8,2.8 L7,6.2 L3.8,9.6" stroke="#a0a0a0" stroke-width="1.3" fill="none"/>
<g id="wm"><text x="49.5" y="156" transform="rotate(-45 49.5 156)" text-anchor="middle" dominant-baseline="central" font-size="24" fill="#ffffff" fill-opacity="0.14">www.cfchi.com</text><text x="334.5" y="156" transform="rotate(-45 334.5 156)" text-anchor="middle" dominant-baseline="central" font-size="24" fill="#ffffff" fill-opacity="0.14">www.cfchi.com</text><text x="619.5" y="156" transform="rotate(-45 619.5 156)" text-anchor="middle" dominant-baseline="central" font-size="24" fill="#ffffff" fill-opacity="0.14">www.cfchi.com</text><text x="904.5" y="156" transform="rotate(-45 904.5 156)" text-anchor="middle" dominant-baseline="central" font-size="24" fill="#ffffff" fill-opacity="0.14">www.cfchi.com</text><text x="1189.5" y="156" transform="rotate(-45 1189.5 156)" text-anchor="middle" dominant-baseline="central" font-size="24" fill="#ffffff" fill-opacity="0.14">www.cfchi.com</text><text x="1474.5" y="156" transform="rotate(-45 1474.5 156)" text-anchor="middle" dominant-baseline="central" font-size="24" fill="#ffffff" fill-opacity="0.14">www.cfchi.com</text><text x="49.5" y="376" transform="rotate(-45 49.5 376)" text-anchor="middle" dominant-baseline="central" font-size="24" fill="#ffffff" fill-opacity="0.14">www.cfchi.com</text><text x="334.5" y="376" transform="rotate(-45 334.5 376)" text-anchor="middle" dominant-baseline="central" font-size="24" fill="#ffffff" fill-opacity="0.14">www.cfchi.com</text><text x="619.5" y="376" transform="rotate(-45 619.5 376)" text-anchor="middle" dominant-baseline="central" font-size="24" fill="#ffffff" fill-opacity="0.14">www.cfchi.com</text><text x="904.5" y="376" transform="rotate(-45 904.5 376)" text-anchor="middle" dominant-baseline="central" font-size="24" fill="#ffffff" fill-opacity="0.14">www.cfchi.com</text><text x="1189.5" y="376" transform="rotate(-45 1189.5 376)" text-anchor="middle" dominant-baseline="central" font-size="24" fill="#ffffff" fill-opacity="0.14">www.cfchi.com</text><text x="1474.5" y="376" transform="rotate(-45 1474.5 376)" text-anchor="middle" dominant-baseline="central" font-size="24" fill="#ffffff" fill-opacity="0.14">www.cfchi.com</text><text x="49.5" y="596" transform="rotate(-45 49.5 596)" text-anchor="middle" dominant-baseline="central" font-size="24" fill="#ffffff" fill-opacity="0.14">www.cfchi.com</text><text x="334.5" y="596" transform="rotate(-45 334.5 596)" text-anchor="middle" dominant-baseline="central" font-size="24" fill="#ffffff" fill-opacity="0.14">www.cfchi.com</text><text x="619.5" y="596" transform="rotate(-45 619.5 596)" text-anchor="middle" dominant-baseline="central" font-size="24" fill="#ffffff" fill-opacity="0.14">www.cfchi.com</text><text x="904.5" y="596" transform="rotate(-45 904.5 596)" text-anchor="middle" dominant-baseline="central" font-size="24" fill="#ffffff" fill-opacity="0.14">www.cfchi.com</text><text x="1189.5" y="596" transform="rotate(-45 1189.5 596)" text-anchor="middle" dominant-baseline="central" font-size="24" fill="#ffffff" fill-opacity="0.14">www.cfchi.com</text><text x="1474.5" y="596" transform="rotate(-45 1474.5 596)" text-anchor="middle" dominant-baseline="central" font-size="24" fill="#ffffff" fill-opacity="0.14">www.cfchi.com</text><text x="49.5" y="816" transform="rotate(-45 49.5 816)" text-anchor="middle" dominant-baseline="central" font-size="24" fill="#ffffff" fill-opacity="0.14">www.cfchi.com</text><text x="334.5" y="816" transform="rotate(-45 334.5 816)" text-anchor="middle" dominant-baseline="central" font-size="24" fill="#ffffff" fill-opacity="0.14">www.cfchi.com</text><text x="619.5" y="816" transform="rotate(-45 619.5 816)" text-anchor="middle" dominant-baseline="central" font-size="24" fill="#ffffff" fill-opacity="0.14">www.cfchi.com</text><text x="904.5" y="816" transform="rotate(-45 904.5 816)" text-anchor="middle" dominant-baseline="central" font-size="24" fill="#ffffff" fill-opacity="0.14">www.cfchi.com</text><text x="1189.5" y="816" transform="rotate(-45 1189.5 816)" text-anchor="middle" dominant-baseline="central" font-size="24" fill="#ffffff" fill-opacity="0.14">www.cfchi.com</text><text x="1474.5" y="816" transform="rotate(-45 1474.5 816)" text-anchor="middle" dominant-baseline="central" font-size="24" fill="#ffffff" fill-opacity="0.14">www.cfchi.com</text></g>
</svg></body></html>
